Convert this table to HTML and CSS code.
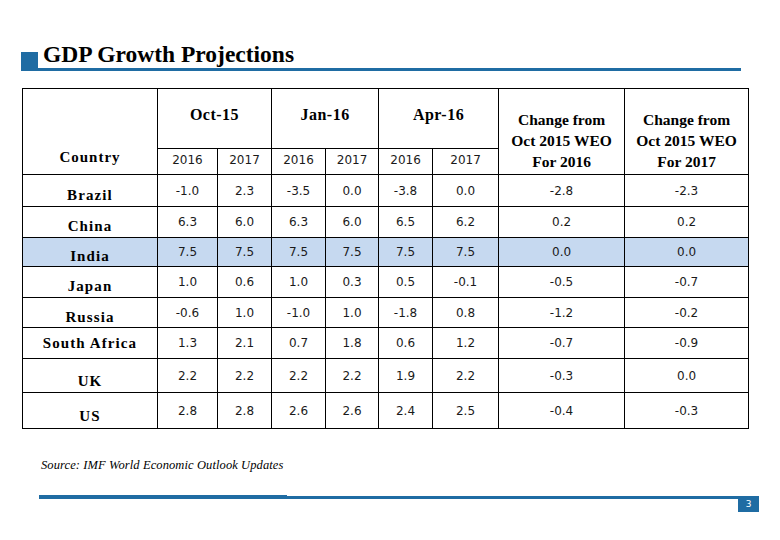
FILE: index.html
```html
<!DOCTYPE html>
<html>
<head>
<meta charset="utf-8">
<link rel="stylesheet" href="styles.css">
</head>
<body>
<div class="page">
  <div class="header">
    <div class="square"></div>
    <div class="title-box"><h1 class="title">GDP Growth Projections</h1></div>
  </div>

  <table class="gdp">
    <colgroup>
      <col class="c-country">
      <col class="c-a"><col class="c-b">
      <col class="c-b"><col class="c-c">
      <col class="c-b"><col class="c-d">
      <col class="c-e"><col class="c-f">
    </colgroup>
    <thead>
      <tr class="h1">
        <th class="country-head" rowspan="2">Country</th>
        <th class="period" colspan="2">Oct-15</th>
        <th class="period" colspan="2">Jan-16</th>
        <th class="period" colspan="2">Apr-16</th>
        <th class="change" rowspan="2">Change from<br>Oct 2015 WEO<br>For 2016</th>
        <th class="change" rowspan="2">Change from<br>Oct 2015 WEO<br>For 2017</th>
      </tr>
      <tr class="h2">
        <td>2016</td><td>2017</td><td>2016</td><td>2017</td><td>2016</td><td>2017</td>
      </tr>
    </thead>
    <tbody>
      <tr class="r-brazil"><th class="name">Brazil</th><td>-1.0</td><td>2.3</td><td>-3.5</td><td>0.0</td><td>-3.8</td><td>0.0</td><td>-2.8</td><td>-2.3</td></tr>
      <tr class="r-china"><th class="name">China</th><td>6.3</td><td>6.0</td><td>6.3</td><td>6.0</td><td>6.5</td><td>6.2</td><td>0.2</td><td>0.2</td></tr>
      <tr class="r-india hl"><th class="name">India</th><td>7.5</td><td>7.5</td><td>7.5</td><td>7.5</td><td>7.5</td><td>7.5</td><td>0.0</td><td>0.0</td></tr>
      <tr class="r-japan"><th class="name">Japan</th><td>1.0</td><td>0.6</td><td>1.0</td><td>0.3</td><td>0.5</td><td>-0.1</td><td>-0.5</td><td>-0.7</td></tr>
      <tr class="r-russia"><th class="name">Russia</th><td>-0.6</td><td>1.0</td><td>-1.0</td><td>1.0</td><td>-1.8</td><td>0.8</td><td>-1.2</td><td>-0.2</td></tr>
      <tr class="r-sa"><th class="name">South Africa</th><td>1.3</td><td>2.1</td><td>0.7</td><td>1.8</td><td>0.6</td><td>1.2</td><td>-0.7</td><td>-0.9</td></tr>
      <tr class="r-uk"><th class="name">UK</th><td>2.2</td><td>2.2</td><td>2.2</td><td>2.2</td><td>1.9</td><td>2.2</td><td>-0.3</td><td>0.0</td></tr>
      <tr class="r-us"><th class="name">US</th><td>2.8</td><td>2.8</td><td>2.6</td><td>2.6</td><td>2.4</td><td>2.5</td><td>-0.4</td><td>-0.3</td></tr>
    </tbody>
  </table>

  <p class="source">Source: IMF World Economic Outlook Updates</p>

  <div class="footer">
    <div class="seg-thick"></div>
    <div class="seg-thin"></div>
    <div class="page-num">3</div>
  </div>
</div>
</body>
</html>
```

FILE: styles.css
```css
html, body {
  margin: 0;
  padding: 0;
  background: #ffffff;
}

.page {
  width: 780px;
  height: 540px;
  overflow: hidden;
}

/* Header */
.header {
  display: flex;
  align-items: flex-end;
  padding-top: 42px;
  padding-left: 21px;
}

.square {
  width: 17px;
  height: 19px;
  background: #1f6ca3;
}

.title-box {
  width: 703px;
  border-bottom: 3px solid #1f6ca3;
  padding-left: 5px;
  padding-bottom: 2px;
  box-sizing: border-box;
}

.title {
  margin: 0;
  font-family: "Liberation Serif", "Times New Roman", serif;
  font-weight: bold;
  font-size: 23.5px;
  line-height: 24px;
  color: #000;
}

/* Table */
.gdp {
  margin-top: 17px;
  margin-left: 22px;
  border-collapse: collapse;
  table-layout: fixed;
  width: 727px;
}

.c-country { width: 135px; }
.c-a { width: 60px; }
.c-b { width: 54px; }
.c-c { width: 53px; }
.c-d { width: 66px; }
.c-e { width: 126px; }
.c-f { width: 124px; }

.gdp th, .gdp td {
  border: 1px solid #000;
  padding: 0;
  text-align: center;
  vertical-align: middle;
}

.gdp td {
  font-family: "DejaVu Sans", Tahoma, sans-serif;
  font-size: 12px;
  color: #1a1a1a;
}

.gdp th {
  font-family: "Liberation Serif", "Times New Roman", serif;
  font-weight: bold;
  color: #000;
}

.h1 { height: 60px; }
.h2 { height: 26px; }

.period {
  font-size: 16px;
  letter-spacing: 0.5px;
  padding-bottom: 8px !important;
}

.change {
  font-size: 15.5px;
  line-height: 21px;
  vertical-align: bottom !important;
  padding-bottom: 2px !important;
}

.country-head {
  font-size: 15px;
  letter-spacing: 1px;
  line-height: 20px;
  vertical-align: bottom !important;
  padding-bottom: 7px !important;
}

.h2 td {
  padding-bottom: 3px;
}

.name {
  font-size: 15px;
  letter-spacing: 1.1px;
  padding-top: 8px !important;
  line-height: 18px;
}

.r-brazil { height: 32px; }
.r-china { height: 31px; }
.r-india { height: 29px; }
.r-japan { height: 31px; }
.r-russia { height: 30px; }
.r-sa { height: 31px; }
.r-uk { height: 34px; }
.r-us { height: 36px; }

.r-sa .name { padding-top: 0 !important; }
.r-uk .name, .r-us .name { padding-top: 10px !important; }

.hl th, .hl td {
  background: #c6d9f0;
}

/* Source */
.source {
  margin: 29px 0 0 41px;
  font-family: "Liberation Serif", "Times New Roman", serif;
  font-style: italic;
  font-size: 12.5px;
  letter-spacing: 0.1px;
  line-height: 15px;
  color: #000;
}

/* Footer */
.footer {
  display: flex;
  align-items: flex-start;
  margin-top: 22px;
  padding-left: 39px;
}

.seg-thick {
  width: 248px;
  height: 4px;
  background: #1f6ca3;
}

.seg-thin {
  width: 451px;
  height: 3px;
  margin-top: 1px;
  background: #1f6ca3;
}

.page-num {
  width: 21px;
  height: 16px;
  margin-top: 1px;
  background: #1f6ca3;
  color: #fff;
  font-family: "DejaVu Sans", sans-serif;
  font-size: 9px;
  line-height: 16px;
  text-align: center;
}
```
